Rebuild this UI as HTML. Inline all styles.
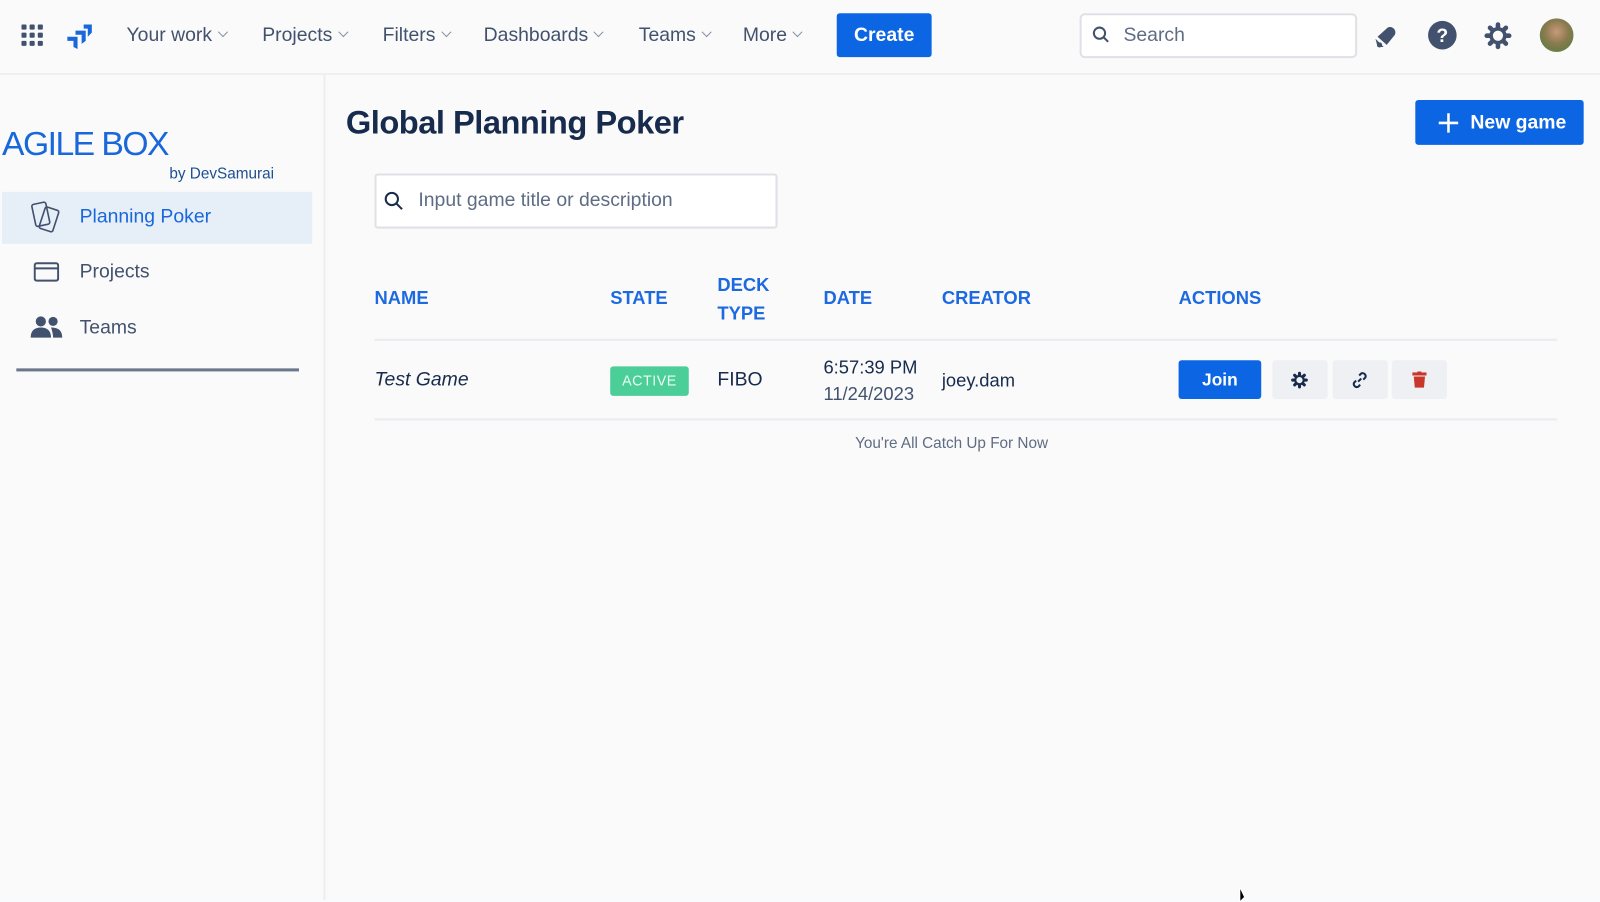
<!DOCTYPE html>
<html><head><meta charset="utf-8"><style>
html,body{margin:0;padding:0;width:1600px;height:900px;overflow:hidden;background:#fafbfc;}
#w{position:absolute;left:0;top:0;width:1568px;height:882px;transform:scale(1.020408);transform-origin:0 0;font-family:"Liberation Sans",sans-serif;color:#172b4d;background:#fafafa}
.a{position:absolute;white-space:nowrap}
.nav{font-size:19px;color:#42526e;top:24px}
.chev{display:inline-block;width:6px;height:6px;border-right:1.5px solid #8993a4;border-bottom:1.5px solid #8993a4;transform:rotate(45deg);margin-left:7px;position:relative;top:-5px}
.th{font-size:18px;font-weight:bold;color:#1d6ae0}
.ib{position:absolute;top:353px;width:54px;height:38px;background:#eef0f3;border-radius:3px}
</style></head><body><div id="w">
<div class="a" style="left:0;top:72px;width:1568px;height:1px;background:#e3e5e8"></div>
<div class="a" style="left:317px;top:73px;width:2px;height:809px;background:#eceef0"></div>
<svg class="a" style="left:21px;top:24px" width="22" height="22" viewBox="0 0 22 22" fill="#42526e"><g><rect x="0" y="0" width="5" height="5" rx="1"/><rect x="8" y="0" width="5" height="5" rx="1"/><rect x="16" y="0" width="5" height="5" rx="1"/><rect x="0" y="8" width="5" height="5" rx="1"/><rect x="8" y="8" width="5" height="5" rx="1"/><rect x="16" y="8" width="5" height="5" rx="1"/><rect x="0" y="16" width="5" height="5" rx="1"/><rect x="8" y="16" width="5" height="5" rx="1"/><rect x="16" y="16" width="5" height="5" rx="1"/></g></svg>
<svg class="a" style="left:64px;top:22px" width="28" height="28" viewBox="0 0 28 28" fill="#1868db"><path d="M18 2h8v8l-4 4V6h-4z"/><path d="M10 8h10v10l-4 3v-9h-6z"/><path d="M2 14h10v12l-4-2v-6H2z"/></svg>
<div class="a nav" style="left:124px">Your work<span class="chev"></span></div>
<div class="a nav" style="left:257px">Projects<span class="chev"></span></div>
<div class="a nav" style="left:375px">Filters<span class="chev"></span></div>
<div class="a nav" style="left:474px">Dashboards<span class="chev"></span></div>
<div class="a nav" style="left:626px">Teams<span class="chev"></span></div>
<div class="a nav" style="left:728px">More<span class="chev"></span></div>
<div class="a" style="left:820px;top:13px;width:93px;height:43px;background:#0c66e4;border-radius:3px;color:#fff;font-size:19px;font-weight:bold;text-align:center;line-height:44px">Create</div>
<div class="a" style="left:1058px;top:13px;width:268px;height:40px;border:2px solid #dfe1e6;border-radius:5px;background:#fff"></div>
<svg class="a" style="left:1070px;top:25px" width="18" height="18" viewBox="0 0 18 18" fill="none" stroke="#42526e" stroke-width="2"><circle cx="7.5" cy="7.5" r="5.5"/><path d="M11.5 11.5L16 16"/></svg>
<div class="a" style="left:1101px;top:24px;font-size:19px;color:#5e6c84">Search</div>
<svg class="a" style="left:1346px;top:22px" width="26" height="26" viewBox="0 0 26 26" fill="#42526e"><path d="M4 14l10-9c4-2 9 2 7 7l-8 10z"/><path d="M2 16l8 8-6 0z"/><circle cx="6" cy="22" r="2.5"/></svg>
<svg class="a" style="left:1399px;top:20px" width="29" height="29" viewBox="0 0 29 29"><circle cx="14.5" cy="14.5" r="14" fill="#42526e"/><text x="14.5" y="21" font-family="Liberation Sans" font-weight="bold" font-size="19" fill="#fff" text-anchor="middle">?</text></svg>
<svg class="a" style="left:1454px;top:21px" width="28" height="28" viewBox="0 0 28 28"><g stroke="#42526e" stroke-width="4.5" stroke-linecap="round"><path d="M14 3v22M3 14h22M6.2 6.2l15.6 15.6M21.8 6.2L6.2 21.8"/></g><circle cx="14" cy="14" r="8.5" fill="#42526e"/><circle cx="14" cy="14" r="5" fill="#fafafa"/></svg>
<div class="a" style="left:1509px;top:18px;width:33px;height:33px;border-radius:50%;background:radial-gradient(circle at 50% 40%,#c99a7a 0,#8a7a50 45%,#6b7c45 70%,#b0a890 100%)"></div>

<div class="a" style="left:2px;top:122px;font-size:33px;color:#1868db;letter-spacing:-1.5px">AGILE BOX</div>
<div class="a" style="left:166px;top:162px;font-size:15px;color:#1d4f91">by DevSamurai</div>
<div class="a" style="left:2px;top:188px;width:304px;height:51px;background:#e6eef8"></div>
<svg class="a" style="left:30px;top:196px" width="32" height="34" viewBox="0 0 32 34" fill="none" stroke="#42526e" stroke-width="1.6"><rect x="3" y="3" width="14" height="22" rx="2" transform="rotate(-12 10 14)"/><rect x="11" y="8" width="14" height="22" rx="2" transform="rotate(18 18 19)"/></svg>
<div class="a" style="left:78px;top:202px;font-size:19px;color:#1868db">Planning Poker</div>
<svg class="a" style="left:33px;top:256px" width="25" height="21" viewBox="0 0 25 21" fill="none" stroke="#42526e" stroke-width="2"><rect x="1" y="2" width="23" height="17" rx="2"/><path d="M1 7h23"/></svg>
<div class="a" style="left:78px;top:256px;font-size:19px;color:#42526e">Projects</div>
<svg class="a" style="left:30px;top:309px" width="32" height="22" viewBox="0 0 32 22" fill="#42526e"><circle cx="10" cy="6" r="5"/><circle cx="22" cy="6" r="4.5"/><path d="M0 22c0-7 4-10 10-10s10 3 10 10z"/><path d="M20 12c6 0 11 2 11 10h-9c0-4-1-7-2-10z"/></svg>
<div class="a" style="left:78px;top:311px;font-size:19px;color:#42526e">Teams</div>
<div class="a" style="left:16px;top:361px;width:277px;height:3px;background:#6b778c"></div>

<div class="a" style="left:339px;top:102px;font-size:32px;font-weight:bold;color:#172b4d;letter-spacing:-0.5px">Global Planning Poker</div>
<div class="a" style="left:1387px;top:98px;width:165px;height:44px;background:#0c66e4;border-radius:3px"></div>
<svg class="a" style="left:1409px;top:110px" width="21" height="21" viewBox="0 0 21 21" stroke="#fff" stroke-width="2.5"><path d="M10.5 1v19M1 10.5h19"/></svg>
<div class="a" style="left:1441px;top:110px;font-size:19px;font-weight:bold;color:#fff">New game</div>
<div class="a" style="left:367px;top:170px;width:391px;height:50px;border:2px solid #dfe1e6;border-radius:3px;background:#fff"></div>
<svg class="a" style="left:376px;top:187px" width="20" height="20" viewBox="0 0 20 20" fill="none" stroke="#172b4d" stroke-width="2"><circle cx="8" cy="8" r="6"/><path d="M12.5 12.5L18 18"/></svg>
<div class="a" style="left:410px;top:186px;font-size:19px;color:#5e6c84">Input game title or description</div>

<div class="a th" style="left:367px;top:282px">NAME</div>
<div class="a th" style="left:598px;top:282px">STATE</div>
<div class="a th" style="left:703px;top:265px;line-height:28px">DECK<br>TYPE</div>
<div class="a th" style="left:807px;top:282px">DATE</div>
<div class="a th" style="left:923px;top:282px">CREATOR</div>
<div class="a th" style="left:1155px;top:282px">ACTIONS</div>
<div class="a" style="left:367px;top:332px;width:1159px;height:2px;background:#ebecf0"></div>
<div class="a" style="left:367px;top:362px;font-size:19px;font-style:italic;color:#172b4d">Test Game</div>
<div class="a" style="left:598px;top:359px;width:77px;height:29px;background:#4bce97;border-radius:3px;color:#e8fff3;font-size:14px;text-align:center;line-height:29px;letter-spacing:0.5px">ACTIVE</div>
<div class="a" style="left:703px;top:362px;font-size:19px">FIBO</div>
<div class="a" style="left:807px;top:350px;font-size:18px">6:57:39 PM</div>
<div class="a" style="left:807px;top:376px;font-size:18px;color:#42526e">11/24/2023</div>
<div class="a" style="left:923px;top:363px;font-size:18px">joey.dam</div>
<div class="a" style="left:1155px;top:353px;width:81px;height:38px;background:#0c66e4;border-radius:3px;color:#fff;font-size:17px;font-weight:bold;text-align:center;line-height:39px">Join</div>
<div class="ib" style="left:1247px"></div>
<div class="ib" style="left:1306px"></div>
<div class="ib" style="left:1364px"></div>
<svg class="a" style="left:1265px;top:364px" width="17" height="17" viewBox="0 0 28 28"><g stroke="#172b4d" stroke-width="5" stroke-linecap="round"><path d="M14 3v22M3 14h22M6.2 6.2l15.6 15.6M21.8 6.2L6.2 21.8"/></g><circle cx="14" cy="14" r="8.5" fill="#172b4d"/><circle cx="14" cy="14" r="5" fill="#eef0f3"/></svg>
<svg class="a" style="left:1324px;top:364px" width="17" height="17" viewBox="0 0 17 17" fill="none" stroke="#172b4d" stroke-width="2"><path d="M7 10l3-3"/><path d="M8 4l2-2a3 3 0 014 4l-2 2"/><path d="M9 13l-2 2a3 3 0 01-4-4l2-2"/></svg>
<svg class="a" style="left:1384px;top:364px" width="14" height="16" viewBox="0 0 14 16" fill="#c9372c"><rect x="0" y="1" width="14" height="3"/><rect x="5" y="0" width="4" height="2"/><path d="M1.5 5h11l-1 11h-9z"/></svg>
<div class="a" style="left:367px;top:410px;width:1159px;height:2px;background:#ebecf0"></div>
<div class="a" style="left:838px;top:426px;font-size:15px;color:#5e6c84">You're All Catch Up For Now</div>
<svg class="a" style="left:1214px;top:868px" width="16" height="16" viewBox="0 0 16 16"><path d="M1 1v15l4-4 3 4z" fill="#000" stroke="#fff"/></svg>
</div></body></html>
